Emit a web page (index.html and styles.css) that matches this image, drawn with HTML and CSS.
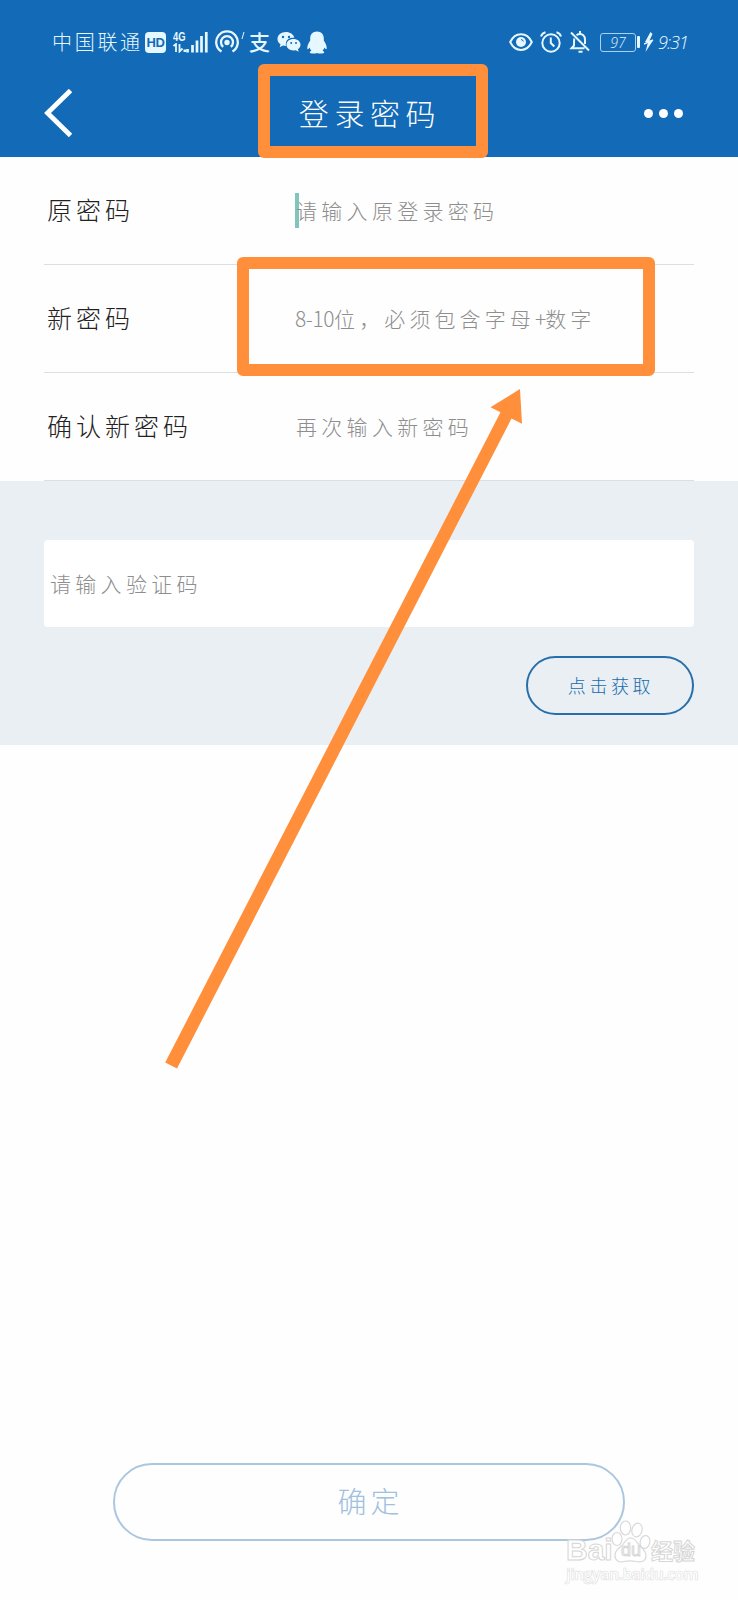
FILE: index.html
```html
<!DOCTYPE html>
<html lang="zh-CN">
<head>
<meta charset="utf-8">
<title>登录密码</title>
<link rel="stylesheet" href="styles.css">
</head>
<body>
<div class="screen">
  <header class="header">
    <div class="status">
      <span class="carrier">中国联通</span>
      <span class="hd">HD</span>
      <span class="net"><span>4G</span>
        <svg width="13" height="10" viewBox="0 0 13 10"><path d="M.5 3L3 1v8M6.500 1v7.500l3-3" fill="none" stroke="currentColor" stroke-width="1.800"/><rect x="10.500" y="6.500" width="2.500" height="2.500" fill="currentColor"/></svg>
      </span>
      <svg class="signal" width="22" height="22" viewBox="0 0 22 22"><path d="M1.500 18V21.500M6.500 14v7.500M11 9.500v12M15.500 5v16.500M20.300 1v20.500" fill="none" stroke="currentColor" stroke-width="2.700"/></svg>
      <svg class="hotspot" width="30" height="24" viewBox="0 0 30 24"><g fill="none" stroke="currentColor" stroke-width="2.300"><path d="M6.500 21.500A10.800 10.800 0 1 1 17.500 21.500"/><path d="M8.200 16.800A6 6 0 1 1 15.800 16.800"/><path d="M29 2l-2 7" stroke-width="1"/></g><circle cx="12" cy="12.500" r="2.700" fill="currentColor"/></svg>
      <span class="pay">支</span>
      <svg class="wechat" width="24" height="22" viewBox="0 0 24 22"><path fill="currentColor" d="M9 1C4 1 .5 4 .5 8c0 2.300 1 4 3 5.300l-.8 3 3.300-1.800 3 .4C8 9 12 6.500 17.300 6.800 16.500 3.200 13 1 9 1z"/><path fill="currentColor" d="M16.500 8c-4 0-7 2.400-7 5.800 0 3.300 3 5.700 7 5.700l2.200-.3 3 1.500-.8-2.500c1.600-1 2.600-2.700 2.600-4.400C23.500 10.400 20.400 8 16.500 8z"/><g fill="#136ab6"><circle cx="6" cy="6" r="1.200"/><circle cx="12" cy="6" r="1.200"/><circle cx="14.200" cy="12" r="1"/><circle cx="19" cy="12" r="1"/></g></svg>
      <svg class="qq" width="20" height="23" viewBox="0 0 20 23"><path fill="currentColor" d="M10 .5C5.500.5 3.200 3.400 3.200 7.500v2C1.500 12 .3 14.500.3 17c0 1.800.9 1.600 2.300-.4.3 1.400 1 2.400 1.900 3.200-1 .3-1.700.9-1.700 1.600 0 1.500 5.600 1.300 7.200.5 1.600.8 7.200 1 7.200-.5 0-.7-.7-1.300-1.700-1.600.9-.8 1.600-1.800 1.900-3.200 1.400 2 2.300 2.200 2.300.4 0-2.500-1.200-5-2.900-7.500v-2C16.800 3.400 14.500.5 10 .5z"/></svg>
      <div class="status-right">
        <svg width="24" height="20" viewBox="0 0 24 20"><path d="M1.200 10C6-.5 18-.5 22.800 10 18 20.500 6 20.500 1.200 10z" fill="none" stroke="currentColor" stroke-width="2"/><circle cx="12" cy="10" r="5" fill="currentColor"/><path d="M12 7.500q2 0 2.300 2" fill="none" stroke="#136ab6"/></svg>
        <svg class="alarm" width="22" height="22" viewBox="0 0 22 22"><g fill="none" stroke="currentColor" stroke-width="2"><circle cx="11" cy="12" r="8.700"/><path d="M10.800 6.500V12l3.500 3.500M1 5.500Q2 2 5.500 1.200M16.500 1.200Q20 2 21 5.500"/></g></svg>
        <svg class="bell" width="22" height="22" viewBox="0 0 22 22"><g fill="none" stroke="currentColor" stroke-width="2"><path d="M2 1.500L20 19.500M7.500 4.300Q11 1.800 14.300 4.300 16 5.700 16 9v4M5.300 7.500Q5 9 5 14.500L2.500 17.300h13M9.500 20.800h4M11 0v3"/></g></svg>
        <span class="battery">97</span><span class="nub"></span>
        <svg class="bolt" width="10" height="20" viewBox="0 0 10 20"><path d="M6.500 0L1 10h3L1.500 20 9 8.500H5.500L8.500 2z" fill="currentColor"/><path d="M0 12l9-4" stroke="currentColor" stroke-width="1.500"/></svg>
        <span class="time">9:31</span>
      </div>
    </div>
    <div class="nav">
      <svg class="back" width="28" height="48" viewBox="0 0 28 48"><path d="M26.500 1.500L3.500 24l23 22.500" fill="none" stroke="#fff" stroke-width="4.800"/></svg>
      <h1 class="title">登录密码</h1>
      <div class="more"><i></i><i></i><i></i></div>
    </div>
  </header>

  <main class="form">
    <div class="row"><label class="label">原密码</label><span class="caret"></span><span class="hint">请输入原登录密码</span></div>
    <div class="row"><label class="label">新密码</label><span class="hint hint-rule"><span class="range">8-10</span>位，必须包含字母<span class="plus">+</span>数字</span></div>
    <div class="row"><label class="label">确认新密码</label><span class="hint">再次输入新密码</span></div>
  </main>

  <section class="verify">
    <div class="code"><span class="hint">请输入验证码</span></div>
    <button class="fetch">点击获取</button>
  </section>

  <footer class="footer"><button class="confirm">确定</button></footer>

  <div class="mark mark-title"></div>
  <div class="mark mark-rule"></div>
  <svg class="arrow" width="738" height="1600" viewBox="0 0 738 1600"><path fill="#ff8f3a" d="M520 389L490.500 407.300 500.500 412.300 165.200 1062.500 177 1068.500 511.500 418.500 522 423.700z"/></svg>

  <div class="watermark">
    <div class="brand">
      <span class="bai">Bai</span>
      <span class="paw"><svg width="40" height="46" viewBox="0 0 40 46"><g fill="#fff" stroke="#d9d9d9" stroke-width="1.200"><ellipse cx="6" cy="20" rx="5" ry="6.500"/><ellipse cx="14.500" cy="9" rx="5.200" ry="7"/><ellipse cx="26" cy="11" rx="5" ry="7" transform="rotate(15 26 11)"/><ellipse cx="34" cy="23" rx="4.800" ry="6.500" transform="rotate(12 34 23)"/><path d="M19.500 19c-4 0-5 3.500-8 7-3 3-8 5-7.500 11 .5 5.500 5 6.500 9 5.500 4-.8 8-.8 12 0 5 1 9.500 0 10-5.500.3-5-3.500-7-7-11-3-3.500-4-7-8.500-7z"/></g></svg><b>du</b></span>
      <span class="jy">经验</span>
    </div>
    <div class="url">jingyan.baidu.com</div>
  </div>
</div>
</body>
</html>
```
FILE: styles.css
```css
* { box-sizing: border-box; }
body {
  margin: 0;
  background: #fefefe;
  font-family: "Noto Sans CJK SC", sans-serif;
  font-weight: 300;
}
svg { display: block; flex: none; }
.screen {
  position: relative;
  display: flex;
  flex-direction: column;
  width: 738px;
  height: 1600px;
  overflow: hidden;
}
.header { height: 157px; background: #136ab6; color: #fff; }
.status {
  display: flex;
  align-items: center;
  height: 84px;
  padding: 0 50px 0 52px;
  color: #e6f8ff;
  white-space: nowrap;
}
.carrier { width: 93px; font-size: 20px; letter-spacing: 2.7px; line-height: 24px; }
.hd {
  width: 21px;
  height: 21px;
  border-radius: 4px;
  background: #e6f8ff;
  color: #136ab6;
  font: bold 13px/21px "Liberation Sans", sans-serif;
  letter-spacing: -0.5px;
  text-align: center;
}
.net { width: 14px; margin-left: 7px; font: bold 12px/12px "Liberation Sans", sans-serif; }
.net span { display: block; transform: scaleX(0.78); transform-origin: left; }
.signal { margin-left: -1px; }
.hotspot { margin-left: 7px; }
.pay { width: 24px; margin-left: 4px; padding-bottom: 3px; font-size: 21px; font-weight: 500; line-height: 24px; }
.wechat { margin-left: 4px; }
.qq { margin-left: 6px; }
.status-right { display: flex; align-items: center; margin-left: auto; }
.alarm { margin-left: 7px; }
.bell { margin-left: 7px; }
.battery {
  width: 36px;
  height: 19px;
  margin-left: 9px;
  border: 1px solid #a8d2f2;
  border-radius: 3px;
  font: italic 300 14px/17px "Open Sans", sans-serif;
  text-align: center;
}
.nub { width: 3px; height: 12px; margin-left: 1px; border-radius: 1px; background: #e6f8ff; }
.bolt { margin-left: 4px; }
.time { width: 30px; margin-left: 4px; font: italic 300 18px/22px "Open Sans", sans-serif; letter-spacing: -1px; }
.nav {
  display: flex;
  align-items: center;
  justify-content: space-between;
  height: 58px;
  padding: 0 55px 0 44px;
}
.title { margin: 0; padding: 0 0 3px 24px; font-size: 30px; font-weight: 300; letter-spacing: 5.6px; line-height: 44px; }
.more { display: flex; gap: 6px; }
.more i { width: 9px; height: 9px; border-radius: 50%; background: #fff; }
.form { padding: 0 44px; background: #fefefe; }
.row {
  display: flex;
  align-items: center;
  height: 108px;
  border-bottom: 1px solid #dcdfe1;
}
.label { width: 252px; padding: 0 0 3px 3px; color: #222; font-size: 25px; letter-spacing: 4px; line-height: 36px; }
.hint { padding-bottom: 2px; color: #8e8e8e; font-size: 21px; letter-spacing: 4.3px; line-height: 30px; white-space: nowrap; }
.caret { width: 4px; height: 35px; margin: 0 -3px 0 -1px; background: #80c6bd; }
.hint-rule { margin-left: -1px; letter-spacing: 4.1px; }
.range { letter-spacing: -0.4px; }
.plus { letter-spacing: -1px; }
.verify {
  display: flex;
  flex-direction: column;
  align-items: flex-end;
  gap: 29px;
  height: 264px;
  padding: 59px 44px 0;
  background: #eaeff4;
}
.code {
  display: flex;
  align-items: center;
  width: 100%;
  height: 87px;
  padding-left: 6px;
  border-radius: 4px;
  background: #fff;
}
.fetch, .confirm { background: transparent; font-family: inherit; font-weight: 300; }
.fetch {
  width: 168px;
  height: 59px;
  padding: 0 0 2px 2px;
  border: 2px solid #276fab;
  border-radius: 30px;
  color: #176bad;
  font-size: 18px;
  letter-spacing: 3.6px;
}
.footer { display: flex; justify-content: center; margin-top: auto; padding-bottom: 59px; }
.confirm {
  width: 512px;
  height: 78px;
  padding: 0 0 5px 3px;
  border: 2px solid #abc7df;
  border-radius: 39px;
  color: #a0c1df;
  font-size: 29px;
  letter-spacing: 4px;
}
.mark { position: absolute; border: 12px solid #ff8f3a; border-radius: 6px; }
.mark-title { left: 258px; top: 64px; width: 230px; height: 94px; }
.mark-rule { left: 237px; top: 257px; width: 418px; height: 119px; }
.arrow { position: absolute; left: 0; top: 0; }
.watermark {
  position: absolute;
  left: 566px;
  top: 1519px;
  width: 134px;
  color: #fff;
  font-family: "Liberation Sans", "Noto Sans CJK SC", sans-serif;
  -webkit-text-stroke: 1px #d6d6d6;
}
.brand { display: flex; align-items: flex-end; height: 46px; white-space: nowrap; }
.bai { width: 45px; font-size: 30px; font-weight: bold; line-height: 30px; }
.paw { display: grid; place-items: end center; }
.paw svg, .paw b { grid-area: 1 / 1; }
.paw b { padding-bottom: 4px; font-size: 18px; line-height: 22px; }
.jy { font: bold 22px/32px "Noto Sans CJK SC", sans-serif; }
.url { margin-top: -1px; font: bold 15.5px/20px "Open Sans", sans-serif; letter-spacing: -0.6px; -webkit-text-stroke: 0.6px #dedede; }
```
